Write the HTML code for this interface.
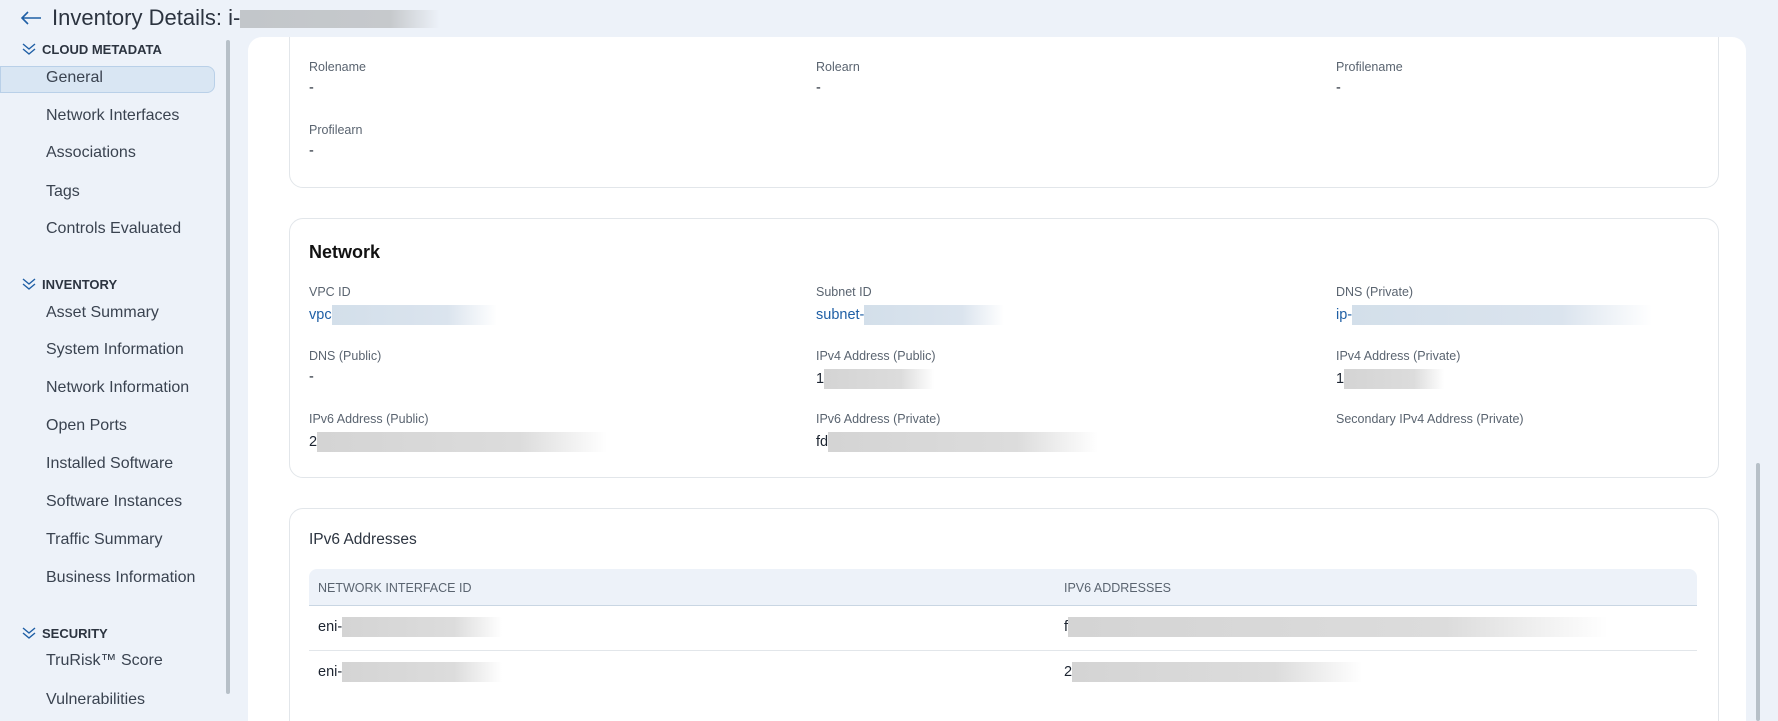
<!DOCTYPE html>
<html><head><style>
*{box-sizing:border-box;margin:0;padding:0}
html,body{width:1778px;height:721px;overflow:hidden}
body{background:#edf2f9;font-family:"Liberation Sans",sans-serif;position:relative;color:#1c2430}
.a{position:absolute}
.title{left:52px;top:5px;font-size:22px;color:#2c3440;white-space:nowrap}
.blur{display:inline-block;height:18px;vertical-align:middle}
.sh{left:22px;font-size:13px;font-weight:bold;color:#2c3440;display:flex;align-items:center;gap:6px}
.si{left:46px;font-size:16px;color:#3a4350}
.main{left:248px;top:37px;width:1498px;height:684px;background:#fff;border-radius:14px 14px 0 0;overflow:hidden}
.card{position:absolute;border:1px solid #e2e6ea;border-radius:14px;background:#fff}
.lab{position:absolute;font-size:12.5px;color:#5a6470}
.val{position:absolute;font-size:14.5px;color:#1c2430;white-space:nowrap}
.lnk{color:#1f5fa5}
.g{display:inline-block;height:20px;vertical-align:middle;background:linear-gradient(90deg,#d4d4d4,#dcdcdc 70%,#fff)}
.gb{display:inline-block;height:20px;vertical-align:middle;background:linear-gradient(90deg,#d3dfea,#dbe4ee 70%,#fff)}
</style></head><body>
<svg class="a" style="left:20px;top:11px" width="22" height="14" viewBox="0 0 22 14"><path d="M21 7H2M8 1L2 7l6 6" stroke="#1f5fa5" stroke-width="1.6" fill="none"/></svg>
<div class="a title">Inventory Details: i-<span class="blur" style="width:200px;background:linear-gradient(90deg,#c2c6ca,#c6c9cc 75%,#edf2f9)"></span></div>

<div class="a" style="left:226px;top:40px;width:4px;height:654px;background:#b7c0c8;border-radius:2px"></div>
<div class="a" style="left:0;top:66px;width:215px;height:27px;background:#d9e6f3;border:1px solid #b9d0e8;border-radius:0 8px 8px 0"></div>

<div class="a sh" style="top:42px"><svg width="14" height="13" viewBox="0 0 14 13"><path d="M1 1l6 5 6-5M1 6l6 5 6-5" stroke="#1f5fa5" stroke-width="1.4" fill="none"/></svg>CLOUD METADATA</div>
<div class="a si" style="top:69px">General</div>
<div class="a si" style="top:107px">Network Interfaces</div>
<div class="a si" style="top:144px">Associations</div>
<div class="a si" style="top:183px">Tags</div>
<div class="a si" style="top:220px">Controls Evaluated</div>
<div class="a sh" style="top:277px"><svg width="14" height="13" viewBox="0 0 14 13"><path d="M1 1l6 5 6-5M1 6l6 5 6-5" stroke="#1f5fa5" stroke-width="1.4" fill="none"/></svg>INVENTORY</div>
<div class="a si" style="top:304px">Asset Summary</div>
<div class="a si" style="top:341px">System Information</div>
<div class="a si" style="top:379px">Network Information</div>
<div class="a si" style="top:417px">Open Ports</div>
<div class="a si" style="top:455px">Installed Software</div>
<div class="a si" style="top:493px">Software Instances</div>
<div class="a si" style="top:531px">Traffic Summary</div>
<div class="a si" style="top:569px">Business Information</div>
<div class="a sh" style="top:626px"><svg width="14" height="13" viewBox="0 0 14 13"><path d="M1 1l6 5 6-5M1 6l6 5 6-5" stroke="#1f5fa5" stroke-width="1.4" fill="none"/></svg>SECURITY</div>
<div class="a si" style="top:652px">TruRisk™ Score</div>
<div class="a si" style="top:691px">Vulnerabilities</div>

<div class="a main">
<div class="card" style="left:41px;top:-20px;width:1430px;height:171px">
<div class="lab" style="left:19px;top:42px">Rolename</div><div class="val" style="left:19px;top:62px">-</div>
<div class="lab" style="left:526px;top:42px">Rolearn</div><div class="val" style="left:526px;top:62px">-</div>
<div class="lab" style="left:1046px;top:42px">Profilename</div><div class="val" style="left:1046px;top:62px">-</div>
<div class="lab" style="left:19px;top:105px">Profilearn</div><div class="val" style="left:19px;top:125px">-</div>
</div>

<div class="card" style="left:41px;top:181px;width:1430px;height:260px">
<div class="a" style="left:19px;top:23px;font-size:18px;font-weight:bold;color:#111">Network</div>
<div class="lab" style="left:19px;top:66px">VPC ID</div><div class="val lnk" style="left:19px;top:86px">vpc<span class="gb" style="width:165px"></span></div>
<div class="lab" style="left:526px;top:66px">Subnet ID</div><div class="val lnk" style="left:526px;top:86px">subnet-<span class="gb" style="width:140px"></span></div>
<div class="lab" style="left:1046px;top:66px">DNS (Private)</div><div class="val lnk" style="left:1046px;top:86px">ip-<span class="gb" style="width:300px"></span></div>
<div class="lab" style="left:19px;top:130px">DNS (Public)</div><div class="val" style="left:19px;top:150px">-</div>
<div class="lab" style="left:526px;top:130px">IPv4 Address (Public)</div><div class="val" style="left:526px;top:150px">1<span class="g" style="width:110px"></span></div>
<div class="lab" style="left:1046px;top:130px">IPv4 Address (Private)</div><div class="val" style="left:1046px;top:150px">1<span class="g" style="width:100px"></span></div>
<div class="lab" style="left:19px;top:193px">IPv6 Address (Public)</div><div class="val" style="left:19px;top:213px">2<span class="g" style="width:290px"></span></div>
<div class="lab" style="left:526px;top:193px">IPv6 Address (Private)</div><div class="val" style="left:526px;top:213px">fd<span class="g" style="width:270px"></span></div>
<div class="lab" style="left:1046px;top:193px">Secondary IPv4 Address (Private)</div>
</div>

<div class="card" style="left:41px;top:471px;width:1430px;height:300px">
<div class="a" style="left:19px;top:22px;font-size:15.5px;color:#2c3440">IPv6 Addresses</div>
<div class="a" style="left:19px;top:60px;width:1388px;height:37px;background:#edf2f9;border-radius:8px 8px 0 0;border-bottom:1px solid #c9d6e3"></div>
<div class="lab" style="left:28px;top:72px">NETWORK INTERFACE ID</div>
<div class="lab" style="left:774px;top:72px">IPV6 ADDRESSES</div>
<div class="val" style="left:28px;top:108px">eni-<span class="g" style="width:160px"></span></div>
<div class="val" style="left:774px;top:108px">f<span class="g" style="width:540px"></span></div>
<div class="a" style="left:19px;top:141px;width:1388px;height:1px;background:#e2e6ea"></div>
<div class="val" style="left:28px;top:153px">eni-<span class="g" style="width:160px"></span></div>
<div class="val" style="left:774px;top:153px">2<span class="g" style="width:290px"></span></div>
</div>
</div>
<div class="a" style="left:1756px;top:463px;width:4px;height:258px;background:#b7c0c8;border-radius:2px"></div>
</body></html>
